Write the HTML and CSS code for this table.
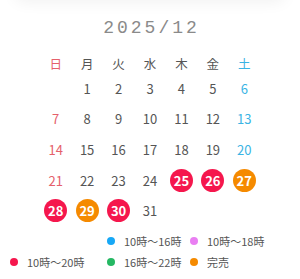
FILE: index.html
```html
<!DOCTYPE html>
<html lang="ja">
<head>
<meta charset="utf-8">
<link rel="stylesheet" href="styles.css">
</head>
<body>
<div class="shade"></div>
<h1 class="title">2025/12</h1>
<div class="cal">
  <div class="wk sun">日</div>
  <div class="wk">月</div>
  <div class="wk">火</div>
  <div class="wk">水</div>
  <div class="wk">木</div>
  <div class="wk">金</div>
  <div class="wk sat">土</div>

  <div class="d"></div>
  <div class="d">1</div>
  <div class="d">2</div>
  <div class="d">3</div>
  <div class="d">4</div>
  <div class="d">5</div>
  <div class="d sat">6</div>

  <div class="d sun">7</div>
  <div class="d">8</div>
  <div class="d">9</div>
  <div class="d">10</div>
  <div class="d">11</div>
  <div class="d">12</div>
  <div class="d sat">13</div>

  <div class="d sun">14</div>
  <div class="d">15</div>
  <div class="d">16</div>
  <div class="d">17</div>
  <div class="d">18</div>
  <div class="d">19</div>
  <div class="d sat">20</div>

  <div class="d sun">21</div>
  <div class="d">22</div>
  <div class="d">23</div>
  <div class="d">24</div>
  <div class="d"><span class="mark red">25</span></div>
  <div class="d"><span class="mark red">26</span></div>
  <div class="d"><span class="mark orange">27</span></div>

  <div class="d"><span class="mark red">28</span></div>
  <div class="d"><span class="mark orange">29</span></div>
  <div class="d"><span class="mark red">30</span></div>
  <div class="d">31</div>
</div>
<ul class="legend">
  <li class="item first"><span class="dot blue"></span>10時〜16時</li>
  <li class="item"><span class="dot purple"></span>10時〜18時</li>
  <li class="item"><span class="dot red"></span>10時〜20時</li>
  <li class="item"><span class="dot green"></span>16時〜22時</li>
  <li class="item"><span class="dot orange"></span>完売</li>
</ul>
</body>
</html>
```
FILE: styles.css
```css
html, body {
  margin: 0;
  padding: 0;
  background: #fff;
}
body {
  font-family: "Noto Sans CJK JP", "Noto Sans", sans-serif;
  color: #555;
  overflow: hidden;
}
.shade {
  height: 20px;
  margin: -20px 14px 0;
  border-radius: 30px;
  box-shadow: 0 2px 16px rgba(0, 0, 0, 0.06);
}
.title {
  margin: 0;
  padding: 18px 0 0 3px;
  height: 20px;
  line-height: 20px;
  font-family: "Liberation Mono", monospace;
  font-weight: normal;
  font-size: 18px;
  letter-spacing: 3px;
  text-align: center;
  color: #8a8a8a;
}
.cal {
  width: 220px;
  margin: 15px auto 0;
  display: grid;
  grid-template-columns: repeat(7, 1fr);
  grid-template-rows: 20px;
  grid-auto-rows: 30.6px;
}
.wk {
  display: flex;
  align-items: center;
  justify-content: center;
  font-size: 12.5px;
  color: #555;
}
.d {
  display: flex;
  align-items: center;
  justify-content: center;
  font-size: 13px;
  color: #555;
}
.sun { color: #e5606b; }
.sat { color: #3ab4e4; }
.mark {
  width: 23px;
  height: 23px;
  border-radius: 50%;
  display: flex;
  align-items: center;
  justify-content: center;
  color: #fff;
  font-weight: bold;
  font-size: 13px;
}
.mark.red { background: #f5174d; }
.mark.orange { background: #f58a00; }
.legend {
  list-style: none;
  margin: 5px 0 0;
  padding: 0 0 0 10px;
  display: grid;
  grid-template-columns: 97px 83px auto;
  grid-auto-rows: 21px;
}
.item {
  display: flex;
  align-items: center;
  font-size: 11px;
  color: #555;
  white-space: nowrap;
}
.item.first { grid-column: 2; }
.dot {
  width: 8px;
  height: 8px;
  border-radius: 50%;
  margin-right: 9px;
  flex: none;
}
.dot.blue { background: #17a8f6; }
.dot.purple { background: #e97ff2; }
.dot.red { background: #f5174d; }
.dot.green { background: #25b863; }
.dot.orange { background: #f58a00; }
```
